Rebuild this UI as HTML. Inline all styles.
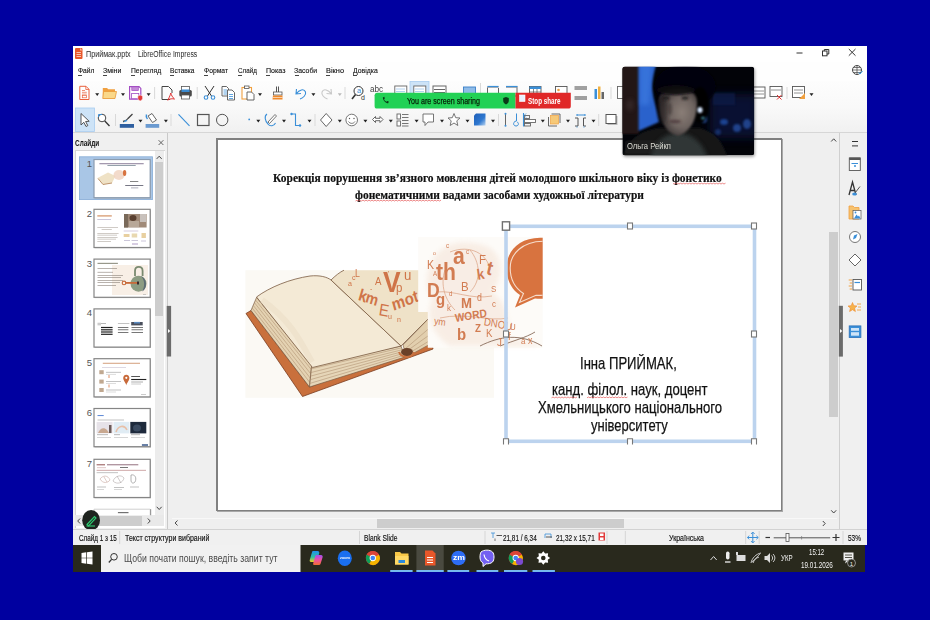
<!DOCTYPE html>
<html><head><meta charset="utf-8">
<style>
*{margin:0;padding:0;box-sizing:border-box}
html,body{width:930px;height:620px;overflow:hidden;position:relative;background:#0000a0;font-family:"Liberation Sans",sans-serif}
.a{position:absolute}
.t{position:absolute;white-space:nowrap;transform-origin:0 50%}
svg.s{position:absolute;left:0;top:0;overflow:visible}

</style></head><body>
<div class="a" style="left:73px;top:46px;width:794px;height:483px;background:#f9f9f9;"></div>
<div class="a" style="left:73px;top:46px;width:794px;height:16px;background:#ffffff;"></div>
<div class="a" style="left:73px;top:62px;width:794px;height:19px;background:#fefefe;"></div>
<div class="a" style="left:73px;top:81px;width:794px;height:51px;background:#f8f8f8;background:linear-gradient(#fdfdfd,#f9f9f9 50%,#f1f1f1)"></div>
<div class="a" style="left:73px;top:132px;width:794px;height:1px;background:#d6d6d6;"></div>
<svg class="s" width="930" height="620" viewBox="0 0 930 620" style="">
<rect x="75" y="48" width="7.5" height="11" rx="1" fill="#e8572a"/>
<path d="M80 48 L82.5 50.5 L80 50.5Z" fill="#f7b8a0"/>
<rect x="76.5" y="52" width="4.5" height="0.8" fill="#fff" opacity=".8"/>
<rect x="76.5" y="54" width="4.5" height="0.8" fill="#fff" opacity=".8"/>
<rect x="76.5" y="56" width="4.5" height="0.8" fill="#fff" opacity=".8"/>
<line x1="796.5" y1="53" x2="802.5" y2="53" stroke="#333" stroke-width="1"/>
<rect x="822.5" y="51" width="4.5" height="4.8" fill="none" stroke="#333" stroke-width="1"/>
<path d="M824.3 51 V49.5 H828.8 V54 H827" fill="none" stroke="#333" stroke-width="1"/>
<path d="M848.8 49 L855.5 55.7 M855.5 49 L848.8 55.7" stroke="#333" stroke-width="1"/>
<circle cx="857" cy="70" r="4.5" fill="none" stroke="#444" stroke-width="1"/>
<path d="M852.5 70 H861.5 M857 65.5 V74.5 M853.5 67.5 H860.5 M853.5 72.5 H860.5" stroke="#444" stroke-width=".7"/>
<path d="M858.5 72.5 L860 74 L862.5 71" fill="none" stroke="#3c9be0" stroke-width="1"/>
</svg>
<div class="t" style="left:86.00px;top:49.89px;font-size:8.4px;line-height:8.4px;color:#2a2a2a;font-family:'Liberation Sans',sans-serif;font-weight:normal;transform:scaleX(0.8552);">Приймак.pptx</div>
<div class="t" style="left:137.70px;top:49.89px;font-size:8.4px;line-height:8.4px;color:#2a2a2a;font-family:'Liberation Sans',sans-serif;font-weight:normal;transform:scaleX(0.8184);">LibreOffice Impress</div>
<div class="t" style="left:77.60px;top:67.21px;font-size:7.9px;line-height:7.9px;color:#111;font-family:'Liberation Sans',sans-serif;font-weight:normal;transform:scaleX(0.8454);-webkit-text-stroke:.12px #111;">Файл</div>
<div class="a" style="left:78.1px;top:75.4px;width:4px;height:0.8px;background:#444;"></div>
<div class="t" style="left:102.80px;top:67.21px;font-size:7.9px;line-height:7.9px;color:#111;font-family:'Liberation Sans',sans-serif;font-weight:normal;transform:scaleX(0.8885);-webkit-text-stroke:.12px #111;">Зміни</div>
<div class="a" style="left:103.3px;top:75.4px;width:4px;height:0.8px;background:#444;"></div>
<div class="t" style="left:130.70px;top:67.21px;font-size:7.9px;line-height:7.9px;color:#111;font-family:'Liberation Sans',sans-serif;font-weight:normal;transform:scaleX(0.8595);-webkit-text-stroke:.12px #111;">Перегляд</div>
<div class="a" style="left:131.2px;top:75.4px;width:4px;height:0.8px;background:#444;"></div>
<div class="t" style="left:169.80px;top:67.21px;font-size:7.9px;line-height:7.9px;color:#111;font-family:'Liberation Sans',sans-serif;font-weight:normal;transform:scaleX(0.8354);-webkit-text-stroke:.12px #111;">Вставка</div>
<div class="a" style="left:170.3px;top:75.4px;width:4px;height:0.8px;background:#444;"></div>
<div class="t" style="left:203.60px;top:67.21px;font-size:7.9px;line-height:7.9px;color:#111;font-family:'Liberation Sans',sans-serif;font-weight:normal;transform:scaleX(0.8598);-webkit-text-stroke:.12px #111;">Формат</div>
<div class="a" style="left:204.1px;top:75.4px;width:4px;height:0.8px;background:#444;"></div>
<div class="t" style="left:237.50px;top:67.21px;font-size:7.9px;line-height:7.9px;color:#111;font-family:'Liberation Sans',sans-serif;font-weight:normal;transform:scaleX(0.7932);-webkit-text-stroke:.12px #111;">Слайд</div>
<div class="a" style="left:238.0px;top:75.4px;width:4px;height:0.8px;background:#444;"></div>
<div class="t" style="left:265.50px;top:67.21px;font-size:7.9px;line-height:7.9px;color:#111;font-family:'Liberation Sans',sans-serif;font-weight:normal;transform:scaleX(0.8980);-webkit-text-stroke:.12px #111;">Показ</div>
<div class="a" style="left:266.0px;top:75.4px;width:4px;height:0.8px;background:#444;"></div>
<div class="t" style="left:294.00px;top:67.21px;font-size:7.9px;line-height:7.9px;color:#111;font-family:'Liberation Sans',sans-serif;font-weight:normal;transform:scaleX(0.8753);-webkit-text-stroke:.12px #111;">Засоби</div>
<div class="a" style="left:294.5px;top:75.4px;width:4px;height:0.8px;background:#444;"></div>
<div class="t" style="left:325.70px;top:67.21px;font-size:7.9px;line-height:7.9px;color:#111;font-family:'Liberation Sans',sans-serif;font-weight:normal;transform:scaleX(0.9368);-webkit-text-stroke:.12px #111;">Вікно</div>
<div class="a" style="left:326.2px;top:75.4px;width:4px;height:0.8px;background:#444;"></div>
<div class="t" style="left:352.70px;top:67.21px;font-size:7.9px;line-height:7.9px;color:#111;font-family:'Liberation Sans',sans-serif;font-weight:normal;transform:scaleX(0.8702);-webkit-text-stroke:.12px #111;">Довідка</div>
<div class="a" style="left:353.2px;top:75.4px;width:4px;height:0.8px;background:#444;"></div>
<svg class="s" width="930" height="620" viewBox="0 0 930 620" style=""><path d="M79.8 86.3 H86 L89 89.3 V99.5 H79.8Z" fill="#fff" stroke="#e8603c" stroke-width="1"/><path d="M85.8 86.3 V89.5 H89" fill="none" stroke="#e8603c" stroke-width=".8"/><path d="M82 90.5 H85 M82 92.3 H86.8 M82 94.1 H86.8" stroke="#e8603c" stroke-width=".7"/><rect x="82.3" y="95.5" width="4.2" height="2.3" fill="none" stroke="#e8603c" stroke-width=".7"/><path d="M95.2 93.3 H99.2 L97.2 96.1Z" fill="#222"/><path d="M102.8 88 H107 L108.3 89.3 H115 V98.5 H102.8Z" fill="#f0a040"/><path d="M103.5 91.5 H116.5 L115 98.5 H102.8Z" fill="#fad88a" stroke="#e89b3a" stroke-width=".8"/><path d="M121 93.3 H125 L123 96.1Z" fill="#222"/><path d="M129.6 86.6 H139 L140.8 88.4 V99.2 H129.6Z" fill="#fff" stroke="#a24cc2" stroke-width="1.2"/><rect x="131.8" y="86.8" width="6.5" height="3.8" fill="#c58ad8" stroke="#a24cc2" stroke-width=".7"/><rect x="131.6" y="93.5" width="7.2" height="5.2" fill="#fff" stroke="#a24cc2" stroke-width=".8"/><path d="M137.8 96 L140.2 95 L142.6 96 V98.2 C142.6 99.6 141.3 100.5 140.2 101 C139.1 100.5 137.8 99.6 137.8 98.2Z" fill="#e23a3a" stroke="#fff" stroke-width=".5"/><path d="M146.6 93.3 H150.6 L148.6 96.1Z" fill="#222"/><rect x="154.1" y="87" width="1" height="12" fill="#d9d9d9"/><path d="M170 99.5 H162 V86.5 H168.5 L172 90 V93" fill="none" stroke="#444" stroke-width="1"/><path d="M168 99.8 C169.5 97 170.5 94.5 170.8 93 C171.2 94.8 172.5 97.5 174.5 99 C172.5 98.6 169.8 98.6 167.5 100.2" fill="none" stroke="#e03030" stroke-width="1"/><rect x="181.5" y="86.5" width="8" height="4" fill="#fff" stroke="#555" stroke-width=".8"/><rect x="179.3" y="90" width="12.5" height="6.5" rx="1.5" fill="#4a4a4a"/><rect x="181.5" y="89.5" width="8" height="2.5" fill="#3a8ad0"/><rect x="181.5" y="95" width="8" height="4" fill="#fff" stroke="#555" stroke-width=".8"/><rect x="196.7" y="87" width="1" height="12" fill="#d9d9d9"/><path d="M205 86 L211.5 96 M214 86 L207.5 96" stroke="#333" stroke-width="1"/><circle cx="206" cy="97.5" r="1.8" fill="none" stroke="#3a8fd8" stroke-width="1.1"/><circle cx="213" cy="97.5" r="1.8" fill="none" stroke="#3a8fd8" stroke-width="1.1"/><path d="M222 86.5 H226.5 L228.5 88.5 V96 H222Z" fill="#fff" stroke="#555" stroke-width=".9"/><path d="M223.5 90 H227 M223.5 92 H227 M223.5 94 H227" stroke="#3a8fd8" stroke-width=".8"/><path d="M227.5 90 H232 L234.5 92.5 V100 H227.5Z" fill="#fff" stroke="#555" stroke-width=".9"/><path d="M229 94.5 H233 M229 96.5 H233 M229 98.5 H233" stroke="#3a8fd8" stroke-width=".8"/><rect x="242" y="87.5" width="9.5" height="11.5" fill="#fff" stroke="#f0a040" stroke-width="1.1"/><rect x="244.5" y="86" width="4.5" height="2.5" fill="#fff" stroke="#555" stroke-width=".8"/><path d="M247 92 H251.5 L254 94.5 V100 H247Z" fill="#fff" stroke="#555" stroke-width=".9"/><path d="M258 93.3 H262 L260 96.1Z" fill="#222"/><path d="M276.5 86.5 V92 M278.5 86.5 V92" stroke="#555" stroke-width="1"/><rect x="273.5" y="92" width="8.5" height="3" fill="#fff" stroke="#555" stroke-width=".8"/><path d="M273 95.5 H282.5 L282.5 99.5 H272.5Z" fill="#f08a2c"/><path d="M273 97.5 H282.5" stroke="#fff" stroke-width=".6"/><path d="M296.5 89 L296 94 L301 93.5 M296.5 93.5 C299 90 304 88 305.5 92 C306.5 95 303 98 300 99" fill="none" stroke="#3a8fd8" stroke-width="1.1"/><path d="M311.4 93.3 H315.4 L313.4 96.1Z" fill="#222"/><path d="M331 89 L331.5 94 L326.5 93.5 M331 93.5 C328.5 90 323.5 88 322 92 C321 95 324.5 98 327.5 99" fill="none" stroke="#c8c8c8" stroke-width="1.1"/><path d="M337.8 93.3 H341.8 L339.8 96Z" fill="#bbb"/><rect x="344.5" y="87" width="1" height="12" fill="#d9d9d9"/><circle cx="358.5" cy="91" r="4.5" fill="#fff" stroke="#333" stroke-width="1"/><path d="M355.5 94.5 L352 99" stroke="#333" stroke-width="1.6"/><rect x="394.8" y="86" width="12" height="10" fill="#fff" stroke="#666" stroke-width=".9"/><path d="M396.5 89 H405 M396.5 91.5 H405 M396.5 94 H405" stroke="#3a8fd8" stroke-width=".8" stroke-dasharray="1 1"/><rect x="410" y="81.5" width="19" height="24" fill="#cde3f7" stroke="#a8cdf0" stroke-width=".8"/><rect x="413.8" y="86" width="12" height="10" fill="#fff" stroke="#666" stroke-width=".9"/><path d="M415.5 89 H424 M415.5 91.5 H424 M415.5 94 H424" stroke="#3a8fd8" stroke-width=".8" stroke-dasharray="1 1"/><rect x="433" y="86" width="13" height="10" fill="#fff" stroke="#666" stroke-width="1"/><path d="M434 89.5 H445 M434 92.5 H445" stroke="#666" stroke-width="1"/><rect x="463.5" y="87" width="12" height="9" fill="#8fbce8" stroke="#3a7fc8" stroke-width=".9"/><rect x="480.0" y="83" width="1" height="12" fill="#d9d9d9"/><path d="M487.5 87 H498.5 M487.5 87.5 V96 H498.5 V88" fill="none" stroke="#555" stroke-width=".9"/><path d="M487.5 86.5 H498.5" stroke="#3a8fd8" stroke-width="1.2"/><path d="M506 87 H517.5 M517 87.5 V96 H506" fill="none" stroke="#555" stroke-width=".9"/><path d="M506 86.5 H517.5" stroke="#3a8fd8" stroke-width="1.2"/><rect x="529.5" y="86.5" width="11.5" height="9.5" fill="#fff" stroke="#555" stroke-width=".9"/><rect x="529.5" y="86.5" width="11.5" height="2.5" fill="#3a8fd8"/><path d="M533.5 89 V96 M537 89 V96 M529.5 92 H541" stroke="#555" stroke-width=".7"/><rect x="555.5" y="86.5" width="11.5" height="12" fill="#fff" stroke="#555" stroke-width=".9"/><circle cx="558.5" cy="90" r="1.3" fill="#f0a040"/><path d="M574.5 87 H587 M574.5 89 H587 M574.5 97 H587 M574.5 99 H587" stroke="#444" stroke-width="1"/><rect x="594.5" y="89" width="2.5" height="10" fill="#3a8fd8"/><rect x="598" y="86.5" width="2.5" height="12.5" fill="#f0b040"/><rect x="601.5" y="92" width="2.5" height="7" fill="#666"/><rect x="610.5" y="87" width="1" height="12" fill="#d9d9d9"/><rect x="617.5" y="86.5" width="6" height="12" fill="#fff" stroke="#666" stroke-width=".9"/><rect x="753" y="87" width="12" height="11" fill="#fff" stroke="#555" stroke-width=".9"/><path d="M754 91 H764 M754 94 H764" stroke="#777" stroke-width=".8"/><rect x="770" y="86.5" width="12" height="10" fill="#fff" stroke="#555" stroke-width=".9"/><path d="M771 90 H781" stroke="#777" stroke-width=".8"/><path d="M777 95 L781.5 99.5 M781.5 95 L777 99.5" stroke="#e03030" stroke-width="1"/><rect x="786.5" y="87" width="1" height="12" fill="#d9d9d9"/><rect x="792.5" y="86.5" width="12" height="11" fill="#fff" stroke="#555" stroke-width=".9"/><path d="M794 90 H803 M794 93 H803" stroke="#777" stroke-width=".8"/><path d="M799 99 L805 93 V99Z" fill="#f0a040"/><path d="M809.5 93.3 H813.5 L811.5 96.1Z" fill="#222"/><rect x="75.5" y="108" width="19" height="23.5" fill="#cde3f7" stroke="#a8cdf0" stroke-width=".8"/><path d="M81 113.5 L81 125 L83.8 122.3 L86 126.5 L87.8 125.6 L85.6 121.5 L89.2 121.3Z" fill="#fff" stroke="#444" stroke-width=".9"/><circle cx="102" cy="118" r="3.8" fill="#fff" stroke="#333" stroke-width=".9"/><path d="M104.8 121 L109.5 126" stroke="#333" stroke-width="1.3"/><path d="M98.5 114.5 H102 M98.5 114.5 V117" stroke="#3a8fd8" stroke-width="1"/><rect x="115.0" y="114" width="1" height="12" fill="#d9d9d9"/><path d="M123 121.5 C125 121 127 120 128 118.5 L132.5 114" stroke="#444" stroke-width="1.3" fill="none"/><path d="M123 122.5 L126 119.5 L127.5 121Z" fill="#3a8fd8"/><rect x="119.8" y="124" width="14.2" height="3.8" fill="#2e5fa0"/><path d="M138.5 119.8 H142.5 L140.5 122.6Z" fill="#222"/><path d="M148 116 L152 113.5 L156.5 120 L152.5 122.5Z" fill="#fff" stroke="#555" stroke-width=".9"/><path d="M146.5 114.5 C146 116 146.5 118 147.5 119" stroke="#3a8fd8" stroke-width="1.5" fill="none"/><rect x="145.6" y="124" width="13.6" height="3.8" fill="#6a9ad0"/><path d="M163.9 119.8 H167.9 L165.9 122.6Z" fill="#222"/><rect x="170.5" y="114" width="1" height="12" fill="#d9d9d9"/><path d="M178.5 114.3 L189.5 125.9" stroke="#3a8fd8" stroke-width="1.1"/><rect x="197.5" y="114.5" width="11.5" height="11" fill="none" stroke="#555" stroke-width="1.2"/><circle cx="222.2" cy="120" r="5.7" fill="none" stroke="#555" stroke-width="1"/><circle cx="249.2" cy="119.4" r=".9" fill="#3a8fd8"/><path d="M256.3 119.8 H260.3 L258.3 122.6Z" fill="#222"/><path d="M267 114 C264 116 265 121 268 124 C270 127 274 126 275.5 123" fill="none" stroke="#3a8fd8" stroke-width="1.1"/><path d="M268 122 L275 114.5 L276.5 116 L269.5 123.5Z" fill="#fff" stroke="#555" stroke-width=".8"/><path d="M282 119.8 H286 L284 122.6Z" fill="#222"/><path d="M291.5 114 H295.5 V125.5 H300" fill="none" stroke="#3a8fd8" stroke-width="1.1"/><circle cx="291.5" cy="114" r="1.2" fill="#3a8fd8"/><circle cx="300" cy="125.5" r="1.2" fill="#3a8fd8"/><path d="M307.5 119.8 H311.5 L309.5 122.6Z" fill="#222"/><rect x="314.5" y="114" width="1" height="12" fill="#d9d9d9"/><path d="M326.2 113.5 L332 120 L326.2 126.5 L320.5 120Z" fill="#fff" stroke="#555" stroke-width=".9"/><path d="M337.8 119.8 H341.8 L339.8 122.6Z" fill="#222"/><circle cx="351.7" cy="120" r="5.8" fill="#fff" stroke="#666" stroke-width=".9"/><circle cx="349.5" cy="118.5" r=".7" fill="#555"/><circle cx="354" cy="118.5" r=".7" fill="#555"/><path d="M348.5 121.5 C350 124 353.5 124 355 121.5" fill="none" stroke="#555" stroke-width=".8"/><path d="M363.4 119.8 H367.4 L365.4 122.6Z" fill="#222"/><path d="M372.5 119.5 L375.5 116.5 V118.3 H380 V116.5 L383 119.5 L380 122.5 V120.7 H375.5 V122.5Z" fill="#fff" stroke="#555" stroke-width=".9"/><path d="M388.8 119.8 H392.8 L390.8 122.6Z" fill="#222"/><rect x="397" y="114" width="3.5" height="5" fill="#fff" stroke="#666" stroke-width=".9"/><rect x="397" y="121" width="3.5" height="5" fill="#fff" stroke="#666" stroke-width=".9"/><path d="M402 114.5 H408.5 M402 117.5 H408.5 M402 120.5 H408.5 M402 123.5 H408.5 M402 126 H408.5" stroke="#666" stroke-width=".9"/><path d="M414.6 119.8 H418.6 L416.6 122.6Z" fill="#222"/><path d="M423 114 H433.5 V122 H428 L425 125.5 V122 H423Z" fill="#fff" stroke="#666" stroke-width=".9"/><path d="M440 119.8 H444 L442 122.6Z" fill="#222"/><path d="M454 113.5 L455.7 117.7 L460 118 L456.8 120.8 L457.8 125.5 L454 123 L450.2 125.5 L451.2 120.8 L448 118 L452.3 117.7Z" fill="#fff" stroke="#666" stroke-width=".9"/><path d="M465.5 119.8 H469.5 L467.5 122.6Z" fill="#222"/><defs><linearGradient id="g3d" x1="0" y1="0" x2="1" y2="1"><stop offset="0" stop-color="#1e5fb8"/><stop offset=".6" stop-color="#2f78d0"/><stop offset="1" stop-color="#b8d4f0"/></linearGradient></defs><path d="M476 113.5 H485.5 V125.5 H474 V115.5Z" fill="url(#g3d)"/><path d="M491 119.8 H495 L493 122.6Z" fill="#222"/><rect x="498.0" y="114" width="1" height="12" fill="#d9d9d9"/><path d="M505.5 113.5 V126" stroke="#666" stroke-width="1"/><circle cx="505.5" cy="113.8" r="1" fill="#3a8fd8"/><circle cx="505.5" cy="125.8" r="1" fill="#3a8fd8"/><path d="M516.5 113.5 V121 M516.5 121 C513 121 512.5 126 516 126 C519 126 519 122.5 517 122" fill="none" stroke="#3a8fd8" stroke-width="1"/><path d="M523.5 113 V126.5" stroke="#3a8fd8" stroke-width="1.1"/><rect x="524.5" y="115.5" width="5" height="3" fill="none" stroke="#666" stroke-width=".9"/><rect x="524.5" y="119.5" width="11" height="3" fill="#fff" stroke="#666" stroke-width=".9"/><rect x="524.5" y="123.5" width="6" height="2.5" fill="none" stroke="#666" stroke-width=".9"/><path d="M526 113.5 L524 115.5 L526 117.5" fill="none" stroke="#3a8fd8" stroke-width=".8"/><path d="M540.8 119.8 H544.8 L542.8 122.6Z" fill="#222"/><path d="M548.5 117 V126 H557" fill="none" stroke="#666" stroke-width="1"/><path d="M551.5 114 H560 V123" fill="none" stroke="#666" stroke-width="1"/><rect x="550.5" y="115.5" width="8" height="8.5" fill="#f6c978" stroke="#f0a040" stroke-width=".7"/><path d="M566 119.8 H570 L568 122.6Z" fill="#222"/><path d="M575 118 H578 V126 H575 M586 118 H583.5 V126 H586" fill="none" stroke="#555" stroke-width="1"/><path d="M577 115 H585 M577 114 V116 M585 114 V116" stroke="#3a8fd8" stroke-width="1"/><path d="M577 126.5 V127.5 M584 126.5 V127.5" stroke="#3a8fd8" stroke-width="1"/><path d="M591.5 119.8 H595.5 L593.5 122.6Z" fill="#222"/><rect x="598.2" y="114" width="1" height="12" fill="#d9d9d9"/><rect x="607.5" y="116" width="10" height="9" fill="#bbb"/><rect x="606" y="114.5" width="10" height="9" fill="#fff" stroke="#555" stroke-width="1"/></svg>
<div class="t" style="left:357.00px;top:86.65px;font-size:7.5px;line-height:7.5px;color:#3a8fd8;font-family:'Liberation Sans',sans-serif;font-weight:normal;">a</div>
<div class="t" style="left:361.00px;top:93.57px;font-size:7px;line-height:7px;color:#333;font-family:'Liberation Sans',sans-serif;font-weight:normal;">d</div>
<div class="t" style="left:369.80px;top:85.38px;font-size:9px;line-height:9px;color:#444;font-family:'Liberation Sans',sans-serif;font-weight:normal;transform:scaleX(0.9097);">abc</div>
<div class="a" style="left:73px;top:133px;width:94px;height:396px;background:#f0f0f0;"></div>
<div class="a" style="left:74.5px;top:149.8px;width:90px;height:378px;background:#ffffff;"></div>
<div class="a" style="left:74.5px;top:149.8px;width:90px;height:1px;background:#d6d6d6;"></div>
<div class="a" style="left:74.5px;top:149.8px;width:1px;height:378px;background:#d6d6d6;"></div>
<div class="a" style="left:167px;top:133px;width:1px;height:396px;background:#c9c9c9;"></div>
<div class="t" style="left:74.80px;top:138.69px;font-size:8.4px;line-height:8.4px;color:#111;font-family:'Liberation Sans',sans-serif;font-weight:bold;transform:scaleX(0.7649);">Слайди</div>
<div class="a" style="left:154.8px;top:151px;width:9px;height:364px;background:#ececec;"></div>
<div class="a" style="left:155.3px;top:162px;width:8.2px;height:153.6px;background:#cdcdcd;"></div>
<div class="a" style="left:168px;top:133px;width:671px;height:396px;background:#efefef;"></div>
<div class="a" style="left:839px;top:133px;width:1px;height:396px;background:#cfcfcf;"></div>
<div class="a" style="left:840px;top:133px;width:27px;height:396px;background:#f0f0f0;"></div>
<div class="a" style="left:829.3px;top:232.4px;width:9px;height:185px;background:#cdcdcd;"></div>
<div class="a" style="left:172px;top:518px;width:665px;height:1px;background:#f8f8f8;"></div>
<div class="a" style="left:377px;top:519px;width:246.5px;height:9px;background:#cdcdcd;"></div>
<div class="a" style="left:75px;top:515.4px;width:89px;height:11px;background:#e9e9e9;"></div>
<div class="a" style="left:96.6px;top:516px;width:45.8px;height:9.5px;background:#cdcdcd;"></div>
<svg class="s" width="930" height="620" viewBox="0 0 930 620" style=""><path d="M156.7 158.9 L159.2 156.20000000000002 L161.7 158.9" fill="none" stroke="#444" stroke-width="1"/><path d="M156.7 506.8 L159.2 509.5 L161.7 506.8" fill="none" stroke="#444" stroke-width="1"/><path d="M80.10000000000001 518.5 L77.7 521 L80.10000000000001 523.5" fill="none" stroke="#444" stroke-width="1"/><path d="M147.8 518.5 L150.2 521 L147.8 523.5" fill="none" stroke="#444" stroke-width="1"/><path d="M831.2 141.5 L833.7 138.8 L836.2 141.5" fill="none" stroke="#444" stroke-width="1"/><path d="M831.2 510.3 L833.7 513.0 L836.2 510.3" fill="none" stroke="#444" stroke-width="1"/><path d="M177.5 520.5 L175.10000000000002 523 L177.5 525.5" fill="none" stroke="#444" stroke-width="1"/><path d="M822.8 521.0 L825.2 523.5 L822.8 526.0" fill="none" stroke="#444" stroke-width="1"/><path d="M158.6 140.2 L163.4 145 M163.4 140.2 L158.6 145" stroke="#555" stroke-width=".9"/><rect x="166.7" y="305.9" width="4.4" height="50.6" fill="#6b6b6b"/><path d="M168 329 L170.3 331 L168 333Z" fill="#fff"/><rect x="838.8" y="305.8" width="4.1" height="50.8" fill="#6b6b6b"/><path d="M840 329 L842.3 331 L840 333Z" fill="#fff"/><rect x="79.5" y="156.8" width="73" height="42.8" fill="#a9c6e6" stroke="#86acd6" stroke-width=".8"/><rect x="94.6" y="160.3" width="56.4" height="38.2" fill="#a0a0a0" opacity=".7"/><rect x="94" y="159.5" width="56.2" height="38.2" fill="#fff" stroke="#8a9cb0" stroke-width="1.2"/><rect x="94.6" y="210.10000000000002" width="56.4" height="38.2" fill="#a0a0a0" opacity=".7"/><rect x="94" y="209.3" width="56.2" height="38.2" fill="#fff" stroke="#858585" stroke-width="1.2"/><rect x="94.6" y="259.90000000000003" width="56.4" height="38.2" fill="#a0a0a0" opacity=".7"/><rect x="94" y="259.1" width="56.2" height="38.2" fill="#fff" stroke="#858585" stroke-width="1.2"/><rect x="94.6" y="309.7" width="56.4" height="38.2" fill="#a0a0a0" opacity=".7"/><rect x="94" y="308.9" width="56.2" height="38.2" fill="#fff" stroke="#858585" stroke-width="1.2"/><rect x="94.6" y="359.5" width="56.4" height="38.2" fill="#a0a0a0" opacity=".7"/><rect x="94" y="358.7" width="56.2" height="38.2" fill="#fff" stroke="#858585" stroke-width="1.2"/><rect x="94.6" y="409.3" width="56.4" height="38.2" fill="#a0a0a0" opacity=".7"/><rect x="94" y="408.5" width="56.2" height="38.2" fill="#fff" stroke="#858585" stroke-width="1.2"/><rect x="94.6" y="460.1" width="56.4" height="38.2" fill="#a0a0a0" opacity=".7"/><rect x="94" y="459.3" width="56.2" height="38.2" fill="#fff" stroke="#858585" stroke-width="1.2"/><path d="M94 515.2 V509.2 H150.2 V515.2" fill="#fff" stroke="#d0d0d0" stroke-width="1"/><rect x="150" y="509.2" width="1.2" height="6" fill="#999"/><rect x="99.4" y="163.15" width="44.30" height="1.1" fill="#7a6a8a" opacity="0.8"/><rect x="107.4" y="165.05" width="28.30" height="0.9" fill="#6a7a8a" opacity="0.8"/><path d="M97.5 178 L108 172.5 L115.5 176 L112 183 L103 184.5 Z" fill="#efe2c6"/><path d="M98 178.5 L103 184.5 L112 183" fill="none" stroke="#b88a60" stroke-width=".9"/><ellipse cx="119" cy="175" rx="5.5" ry="5" fill="#f0d2be" opacity=".8"/><ellipse cx="124.6" cy="173" rx="1.7" ry="3" fill="#d8733f"/><rect x="130" y="181.10" width="8.30" height="0.8" fill="#666" opacity="1"/><rect x="125.2" y="185.10" width="18.10" height="0.8" fill="#556" opacity="1"/><rect x="131" y="187.50" width="7.30" height="0.8" fill="#99a" opacity="1"/><rect x="97.3" y="215.25" width="14.50" height="1.3" fill="#d89a70" opacity="1"/><rect x="97.3" y="219.20" width="13.70" height="0.6" fill="#a8a0c0" opacity="1"/><rect x="124" y="214" width="22.6" height="13.5" fill="#a08a78"/><rect x="124" y="214" width="4" height="13.5" fill="#7a6a5a"/><ellipse cx="133" cy="218" rx="3.5" ry="3" fill="#5a4030"/><rect x="129" y="221" width="10" height="6" fill="#b8a898"/><rect x="140" y="214" width="6" height="8" fill="#d8d8d8" opacity=".7"/><rect x="97.3" y="227.10" width="20.70" height="0.6" fill="#b0a8a0" opacity="1"/><rect x="101.6" y="229.20" width="10.20" height="0.6" fill="#b0a8a0" opacity="1"/><rect x="97.3" y="233.10" width="21.30" height="0.6" fill="#b0a8a0" opacity="1"/><rect x="97.3" y="234.80" width="19.70" height="0.6" fill="#b0a8a0" opacity="1"/><rect x="97.3" y="237.20" width="20.30" height="0.6" fill="#b0a8a0" opacity="1"/><rect x="97.3" y="238.80" width="18.70" height="0.6" fill="#b0a8a0" opacity="1"/><rect x="97.3" y="241.00" width="13.70" height="0.6" fill="#b0a8a0" opacity="1"/><rect x="123.7" y="230.70" width="14.60" height="0.6" fill="#b8a8c8" opacity="1"/><rect x="123.7" y="234" width="5.8" height="3" fill="#e8d0a0"/><rect x="131.7" y="233.5" width="5.5" height="4" fill="#e8d8b0"/><rect x="141.5" y="233" width="4.4" height="5" fill="#e8d0a0"/><rect x="124" y="240.20" width="6.00" height="0.6" fill="#a8a0c0" opacity="1"/><rect x="131.5" y="240.20" width="6.50" height="0.6" fill="#a8a0c0" opacity="1"/><rect x="141" y="240.70" width="5.00" height="0.6" fill="#a8a0c0" opacity="1"/><rect x="132" y="243.70" width="6.00" height="0.6" fill="#7a5aa0" opacity="1"/><rect x="97.5" y="262.85" width="20.40" height="0.9" fill="#776" opacity="1"/><rect x="112" y="265" width="36" height="30" fill="#f8efe6"/><rect x="97.5" y="268.20" width="19.50" height="0.6" fill="#8a8078" opacity="1"/><rect x="97.5" y="271.90" width="15.50" height="0.6" fill="#8a8078" opacity="1"/><rect x="97.5" y="275.40" width="25.50" height="0.6" fill="#8a8078" opacity="1"/><rect x="97.5" y="277.20" width="23.50" height="0.6" fill="#8a8078" opacity="1"/><rect x="97.5" y="280.20" width="25.50" height="0.6" fill="#8a8078" opacity="1"/><rect x="97.5" y="282.00" width="22.50" height="0.6" fill="#8a8078" opacity="1"/><rect x="97.5" y="285.20" width="18.50" height="0.6" fill="#8a8078" opacity="1"/><path d="M135 276 V271 C135 265.5 142.6 265.5 142.6 271 V276" fill="none" stroke="#7a8a70" stroke-width="1.8"/><ellipse cx="138.5" cy="283.7" rx="8" ry="8" fill="#8c9c82"/><path d="M141 276 C147 278 148 289 142 291.5 C145 287 145 280 141 276Z" fill="#5c6c74"/><rect x="125" y="282" width="12.5" height="1.8" fill="#c86a3a"/><circle cx="124" cy="282.9" r="1.8" fill="none" stroke="#c86a3a" stroke-width="1.1"/><rect x="137" y="281.5" width="2" height="3" fill="#3a2a2a"/><rect x="143" y="294.20" width="3.00" height="0.6" fill="#aaa" opacity="1"/><rect x="97.5" y="322.7" width="3.5" height="2.7" fill="#ccc"/><rect x="101" y="323.20" width="5.00" height="0.6" fill="#888" opacity="1"/><rect x="101" y="326.90" width="11.60" height="1.2" fill="#222" opacity="1"/><rect x="101" y="329.20" width="11.60" height="1.2" fill="#222" opacity="1"/><rect x="101" y="331.40" width="11.60" height="1.2" fill="#222" opacity="1"/><rect x="101" y="333.70" width="11.60" height="1.2" fill="#222" opacity="1"/><rect x="117.9" y="323.25" width="11.50" height="0.7" fill="#aaa" opacity="1"/><rect x="117.9" y="327.10" width="10.50" height="0.8" fill="#555" opacity="1"/><rect x="117.9" y="329.40" width="10.50" height="0.8" fill="#555" opacity="1"/><rect x="117.9" y="332.10" width="10.50" height="0.8" fill="#555" opacity="1"/><rect x="131.2" y="322" width="11.5" height="3.4" fill="#2a3040" opacity=".85"/><rect x="134" y="321.9" width="6" height="1.6" fill="#5a8ac0"/><rect x="131.5" y="327.10" width="11.50" height="0.8" fill="#555" opacity="1"/><rect x="131.5" y="329.40" width="11.50" height="0.8" fill="#555" opacity="1"/><rect x="131.5" y="332.10" width="11.50" height="0.8" fill="#555" opacity="1"/><rect x="102.8" y="362.75" width="37.20" height="1.1" fill="#d8a888" opacity="1"/><rect x="102" y="367.40" width="24.00" height="0.6" fill="#c8c0d0" opacity="1"/><rect x="99.3" y="370.2" width="4.4" height="4" fill="#c0a890"/><rect x="106" y="371.90" width="15.00" height="0.6" fill="#999" opacity="1"/><rect x="106" y="373.95" width="10.00" height="0.5" fill="#bbb" opacity="1"/><rect x="99.3" y="379.6" width="4.4" height="4" fill="#c0a890"/><rect x="106" y="381.30" width="15.00" height="0.6" fill="#999" opacity="1"/><rect x="106" y="383.35" width="10.00" height="0.5" fill="#bbb" opacity="1"/><rect x="99.3" y="388" width="4.4" height="4" fill="#c0a890"/><rect x="106" y="389.70" width="15.00" height="0.6" fill="#999" opacity="1"/><rect x="106" y="391.75" width="10.00" height="0.5" fill="#bbb" opacity="1"/><rect x="108.6" y="375.00" width="0.80" height="3" fill="#d8733f" opacity="1"/><rect x="108.6" y="384.50" width="0.80" height="3" fill="#d8733f" opacity="1"/><path d="M123.2 378 C123.2 373.5 129.4 373.5 129.4 378 C129.4 380.5 126.3 383.5 126.3 385.5 C126.3 383.5 123.2 380.5 123.2 378Z" fill="#c86a3a"/><circle cx="126.3" cy="377.8" r="1.1" fill="#fff"/><rect x="131.2" y="376.05" width="8.80" height="0.9" fill="#444" opacity="1"/><rect x="131.2" y="378.95" width="15.10" height="1.1" fill="#222" opacity="1"/><rect x="131.2" y="381.70" width="11.80" height="0.6" fill="#777" opacity="1"/><rect x="131.2" y="383.75" width="9.80" height="0.5" fill="#999" opacity="1"/><rect x="141" y="394.20" width="5.00" height="0.6" fill="#aaa" opacity="1"/><rect x="97.5" y="415.15" width="6.20" height="0.9" fill="#4a7ad0" opacity="1"/><rect x="97.5" y="419.70" width="26.50" height="0.6" fill="#999" opacity="1"/><rect x="96.6" y="421.9" width="16" height="11.5" fill="#e6e2e8"/><path d="M98 433 C100 428 104 427 107 430 L109 433Z" fill="#c8a890"/><rect x="109" y="425" width="2.5" height="8" fill="#6a5a58"/><rect x="113.5" y="421.9" width="15.9" height="11.5" fill="#e0ecf4"/><path d="M116 432 C118 426 124 424 127 430" fill="none" stroke="#e8c0a8" stroke-width="1.6"/><rect x="130.3" y="421.9" width="16" height="11.5" fill="#1e2a3c"/><ellipse cx="137" cy="428" rx="4" ry="3.5" fill="#3a4a60"/><rect x="97" y="434.50" width="11.00" height="0.6" fill="#888" opacity="1"/><rect x="97" y="437.20" width="14.00" height="0.6" fill="#bbb" opacity="1"/><rect x="114" y="434.50" width="6.00" height="0.6" fill="#888" opacity="1"/><rect x="114" y="437.20" width="14.00" height="0.6" fill="#bbb" opacity="1"/><rect x="131" y="434.50" width="9.00" height="0.6" fill="#888" opacity="1"/><rect x="131" y="437.20" width="14.00" height="0.6" fill="#bbb" opacity="1"/><rect x="141.9" y="444.30" width="6.10" height="1.4" fill="#2a4a80" opacity="1"/><rect x="96.6" y="464.30" width="8.40" height="1" fill="#905050" opacity="1"/><rect x="107" y="464.35" width="31.30" height="0.9" fill="#886070" opacity="1"/><rect x="120" y="467.10" width="8.00" height="0.8" fill="#555" opacity="1"/><rect x="97" y="467.50" width="9.00" height="0.6" fill="#c8a0a0" opacity="1"/><rect x="96.6" y="469.90" width="49.40" height="0.6" fill="#b07070" opacity="1"/><rect x="96.6" y="472.50" width="21.40" height="0.6" fill="#999" opacity="1"/><path d="M100 479 C103 475 108 475 110 480 C108 483 103 484 100 479Z M104 477 L107 482" fill="none" stroke="#c8a8a0" stroke-width=".6"/><path d="M113 481 C115 476 121 474 124 478 C123 483 117 485 113 481Z M117 476 L121 483" fill="none" stroke="#b0a8a8" stroke-width=".6"/><path d="M131 475 C135 474 137 478 135 482 C133 484 131 483 131 480Z" fill="none" stroke="#909090" stroke-width=".7"/><rect x="97" y="486.70" width="9.00" height="0.6" fill="#999" opacity="1"/><rect x="114" y="487.20" width="10.00" height="0.6" fill="#999" opacity="1"/><rect x="130" y="486.70" width="9.00" height="0.6" fill="#999" opacity="1"/><rect x="114" y="489.20" width="8.00" height="0.6" fill="#bbb" opacity="1"/><rect x="97" y="489.20" width="7.00" height="0.6" fill="#bbb" opacity="1"/><rect x="117.9" y="512.25" width="10.60" height="0.9" fill="#444" opacity="1"/><ellipse cx="91.1" cy="520.3" rx="8.9" ry="10.3" fill="#1f2420"/><path d="M87 524.5 L94.5 516.5 L96 518 L88.5 526Z" fill="none" stroke="#2ecc71" stroke-width="1.1"/><path d="M86.5 526 H95" stroke="#2ecc71" stroke-width="1.1"/><path d="M852 141.5 H858 M852 145.9 H858" stroke="#333" stroke-width="1"/><rect x="849.3" y="158" width="11" height="12.5" fill="#fff" stroke="#555" stroke-width=".9"/><rect x="849.3" y="157.5" width="11" height="2.5" fill="#555"/><path d="M851.5 163.5 H858" stroke="#3a8fd8" stroke-width="1"/><circle cx="855" cy="166" r="1" fill="#3a8fd8"/><path d="M849 195 L852.5 182 L856 195 M850.3 190.5 H854.7" fill="none" stroke="#333" stroke-width="1.3"/><path d="M855 193 L860 186.5" stroke="#555" stroke-width="1"/><ellipse cx="854.5" cy="194" rx="2.3" ry="1.5" fill="#3a8fd8"/><path d="M849 206 H853 L854.5 207.5 H859 V219 H849Z" fill="#f6c26e" stroke="#f0a040" stroke-width=".8"/><rect x="853" y="210.5" width="8" height="8.5" fill="#fff" stroke="#555" stroke-width=".7"/><path d="M854 218.5 L856.5 214.5 L858 216.5 L859 215.5 L860.5 218.5Z" fill="#3a8fd8"/><circle cx="855.5" cy="212.5" r=".9" fill="#3a8fd8"/><circle cx="855" cy="237" r="5.5" fill="#fff" stroke="#777" stroke-width="1"/><path d="M853 239.5 L854 235.5 L857.5 234 L856 238Z" fill="#3a8fd8"/><path d="M855 254 L861 260 L855 266 L849 260Z" fill="#fff" stroke="#666" stroke-width="1"/><path d="M848.7 280 H852 M849.7 283 H852 M848.7 286 H852 M849.7 289 H852" stroke="#f0a040" stroke-width="1"/><rect x="853" y="279.5" width="8.5" height="10.5" fill="#fff" stroke="#555" stroke-width=".9"/><path d="M854.5 282.5 H860" stroke="#3a8fd8" stroke-width="1.2"/><path d="M852.5 302.5 L853.8 305.7 L857 306 L854.6 308.1 L855.4 311.5 L852.5 309.7 L849.6 311.5 L850.4 308.1 L848 306 L851.2 305.7Z" fill="#f6b24a" stroke="#f08a2c" stroke-width=".6"/><path d="M857 304 H861 M858 307 H861 M857 310 H861" stroke="#f0a040" stroke-width=".9"/><rect x="849.2" y="325.9" width="11.7" height="11.6" fill="#3a8fd8" stroke="#2a6fb8" stroke-width=".8"/><rect x="851" y="328" width="8" height="2.8" fill="#cfe4f7"/><rect x="851" y="332.2" width="8" height="3.5" fill="#cfe4f7"/></svg>
<div class="t" style="left:86.70px;top:158.96px;font-size:9.5px;line-height:9.5px;color:#555;font-family:'Liberation Sans',sans-serif;font-weight:normal;">1</div>
<div class="t" style="left:86.70px;top:208.76px;font-size:9.5px;line-height:9.5px;color:#555;font-family:'Liberation Sans',sans-serif;font-weight:normal;">2</div>
<div class="t" style="left:86.70px;top:258.56px;font-size:9.5px;line-height:9.5px;color:#555;font-family:'Liberation Sans',sans-serif;font-weight:normal;">3</div>
<div class="t" style="left:86.70px;top:308.36px;font-size:9.5px;line-height:9.5px;color:#555;font-family:'Liberation Sans',sans-serif;font-weight:normal;">4</div>
<div class="t" style="left:86.70px;top:358.16px;font-size:9.5px;line-height:9.5px;color:#555;font-family:'Liberation Sans',sans-serif;font-weight:normal;">5</div>
<div class="t" style="left:86.70px;top:407.96px;font-size:9.5px;line-height:9.5px;color:#555;font-family:'Liberation Sans',sans-serif;font-weight:normal;">6</div>
<div class="t" style="left:86.70px;top:458.76px;font-size:9.5px;line-height:9.5px;color:#555;font-family:'Liberation Sans',sans-serif;font-weight:normal;">7</div>
<div class="a" style="left:217px;top:139px;width:566px;height:373px;background:#a8a8a8;"></div>
<div class="a" style="left:216px;top:138px;width:566px;height:373px;background:#808080;"></div>
<div class="a" style="left:217.5px;top:139.5px;width:563px;height:370px;background:#ffffff;"></div>
<div class="t" style="left:273.30px;top:170.91px;font-size:13px;line-height:13px;color:#111;font-family:'Liberation Serif',serif;font-weight:bold;transform:scaleX(0.8842);-webkit-text-stroke:.2px #111;">Корекція порушення зв’язного мовлення дітей молодшого шкільного віку із фонетико</div>
<div class="t" style="left:355.30px;top:187.71px;font-size:13px;line-height:13px;color:#111;font-family:'Liberation Serif',serif;font-weight:bold;transform:scaleX(0.8815);-webkit-text-stroke:.2px #111;">фонематичними вадами засобами художньої літератури</div>
<svg class="s" width="930" height="620" viewBox="0 0 930 620" style=""><path d="M355.5 201 L357.0 200.2 L358.5 201 L360.0 200.2 L361.5 201 L363.0 200.2 L364.5 201 L366.0 200.2 L367.5 201 L369.0 200.2 L370.5 201 L372.0 200.2 L373.5 201 L375.0 200.2 L376.5 201 L378.0 200.2 L379.5 201 L381.0 200.2 L382.5 201 L384.0 200.2 L385.5 201 L387.0 200.2 L388.5 201 L390.0 200.2 L391.5 201 L393.0 200.2 L394.5 201 L396.0 200.2 L397.5 201 L399.0 200.2 L400.5 201 L402.0 200.2 L403.5 201 L405.0 200.2 L406.5 201 L408.0 200.2 L409.5 201 L411.0 200.2 L412.5 201 L414.0 200.2 L415.5 201 L417.0 200.2 L418.5 201 L420.0 200.2 L421.5 201 L423.0 200.2 L424.5 201 L426.0 200.2 L427.5 201 L429.0 200.2 L430.5 201 L432.0 200.2 L433.5 201 L435.0 200.2 L436.5 201 L438.0 200.2 L439.5 201 L441.0 200.2" fill="none" stroke="#e04040" stroke-width=".6"/><path d="M673 184 L674.5 183.2 L676.0 184 L677.5 183.2 L679.0 184 L680.5 183.2 L682.0 184 L683.5 183.2 L685.0 184 L686.5 183.2 L688.0 184 L689.5 183.2 L691.0 184 L692.5 183.2 L694.0 184 L695.5 183.2 L697.0 184 L698.5 183.2 L700.0 184 L701.5 183.2 L703.0 184 L704.5 183.2 L706.0 184 L707.5 183.2 L709.0 184 L710.5 183.2 L712.0 184 L713.5 183.2 L715.0 184 L716.5 183.2 L718.0 184 L719.5 183.2 L721.0 184 L722.5 183.2 L724.0 184 L725.5 183.2" fill="none" stroke="#e04040" stroke-width=".6"/><rect x="245.4" y="270.2" width="248.6" height="127.6" fill="#fbf9f4"/><path d="M246 313.5 L302.5 396.5 L433 349 L432 343.5 L309.5 387 L251 310.5 Z" fill="#c9703c" stroke="#7a3c20" stroke-width=".8"/><path d="M251 310.5 L256.6 297.4 L311.7 365.2 L309.5 387 Z" fill="#e4d2b2" stroke="#7a5a40" stroke-width=".7"/><path d="M252.1 307.9 L309.9 382.6" stroke="#a88868" stroke-width=".5"/><path d="M253.2 305.3 L310.4 378.3" stroke="#a88868" stroke-width=".5"/><path d="M254.4 302.6 L310.8 373.9" stroke="#a88868" stroke-width=".5"/><path d="M255.5 300.0 L311.3 369.6" stroke="#a88868" stroke-width=".5"/><path d="M311.7 365.2 L401 346 L405 357 L309.5 387 Z" fill="#e6d6b8" stroke="#7a5a40" stroke-width=".7"/><path d="M311.3 368.8 L401.7 347.8" stroke="#a88868" stroke-width=".5"/><path d="M311.0 372.5 L402.3 349.7" stroke="#a88868" stroke-width=".5"/><path d="M310.6 376.1 L403.0 351.5" stroke="#a88868" stroke-width=".5"/><path d="M310.2 379.7 L403.7 353.3" stroke="#a88868" stroke-width=".5"/><path d="M309.9 383.4 L404.3 355.2" stroke="#a88868" stroke-width=".5"/><path d="M403 345 L432 315 L434 342 L406.5 357 Z" fill="#e2cfae" stroke="#8a6a50" stroke-width=".7"/><path d="M405 349 L433 325 M405.5 352 L433.5 332 M406 355 L434 338" stroke="#a88868" stroke-width=".5"/><path d="M256.5 297 C270 287 290 279 310 276 C320 275 327 277 331 280 L401 346 L312.5 367.5 Z" fill="#f4ead6" stroke="#7a5a40" stroke-width=".8"/><path d="M262 300 C290 320 300 340 312 362" fill="none" stroke="#eadcc4" stroke-width="6" opacity=".5"/><path d="M331 280 C335 276 340 272 344 270.2 L427.8 270.2 L432 315 L401 346 Z" fill="#efe2c8"/><path d="M344 270.2 C340 272 335 276 331 280 L401 346 L432 315" fill="none" stroke="#7a5a40" stroke-width=".8"/><ellipse cx="407" cy="352" rx="6" ry="4" fill="#6a4028"/><path d="M399 352 C401 358 412 359 414 352" fill="none" stroke="#c9713f" stroke-width="2"/></svg>
<div class="t" style="left:382.50px;top:267.31px;font-size:30px;line-height:30px;color:#cf7448;font-family:'Liberation Sans',sans-serif;font-weight:bold;transform:scaleX(.88) rotate(0deg);">V</div>
<div class="t" style="left:404.00px;top:267.00px;font-size:15px;line-height:15px;color:#cf7448;font-family:'Liberation Sans',sans-serif;font-weight:normal;transform:scaleX(.88) rotate(0deg);">u</div>
<div class="t" style="left:358.50px;top:285.61px;font-size:17px;line-height:17px;color:#cf7448;font-family:'Liberation Sans',sans-serif;font-weight:bold;transform:scaleX(.88) rotate(18deg);">k</div>
<div class="t" style="left:366.00px;top:289.46px;font-size:16px;line-height:16px;color:#cf7448;font-family:'Liberation Sans',sans-serif;font-weight:bold;transform:scaleX(.88) rotate(18deg);">m</div>
<div class="t" style="left:378.50px;top:301.11px;font-size:17px;line-height:17px;color:#cf7448;font-family:'Liberation Sans',sans-serif;font-weight:normal;transform:scaleX(.88) rotate(10deg);">E</div>
<div class="t" style="left:392.00px;top:296.61px;font-size:17px;line-height:17px;color:#cf7448;font-family:'Liberation Sans',sans-serif;font-weight:bold;transform:scaleX(.88) rotate(-18deg);">mot</div>
<div class="t" style="left:375.00px;top:276.39px;font-size:11px;line-height:11px;color:#cf7448;font-family:'Liberation Sans',sans-serif;font-weight:normal;transform:scaleX(.88) rotate(0deg);">A</div>
<div class="t" style="left:396.00px;top:281.00px;font-size:13px;line-height:13px;color:#cf7448;font-family:'Liberation Sans',sans-serif;font-weight:normal;transform:scaleX(.88) rotate(0deg);">p</div>
<div class="t" style="left:354.50px;top:268.53px;font-size:10px;line-height:10px;color:#cf7448;font-family:'Liberation Sans',sans-serif;font-weight:normal;transform:scaleX(.88) rotate(0deg);">L</div>
<div class="t" style="left:348.00px;top:280.23px;font-size:8px;line-height:8px;color:#cf7448;font-family:'Liberation Sans',sans-serif;font-weight:normal;transform:scaleX(.88) rotate(0deg);">a</div>
<div class="t" style="left:397.00px;top:316.23px;font-size:8px;line-height:8px;color:#cf7448;font-family:'Liberation Sans',sans-serif;font-weight:normal;transform:scaleX(.88) rotate(0deg);">n</div>
<div class="t" style="left:352.00px;top:274.23px;font-size:8px;line-height:8px;color:#cf7448;font-family:'Liberation Sans',sans-serif;font-weight:normal;transform:scaleX(.88) rotate(0deg);">c</div>
<div class="t" style="left:388.00px;top:313.23px;font-size:8px;line-height:8px;color:#cf7448;font-family:'Liberation Sans',sans-serif;font-weight:normal;transform:scaleX(.88) rotate(0deg);">u</div>
<div class="t" style="left:370.00px;top:285.23px;font-size:8px;line-height:8px;color:#cf7448;font-family:'Liberation Sans',sans-serif;font-weight:normal;transform:scaleX(.88) rotate(0deg);">-</div>
<div class="t" style="left:388.00px;top:270.23px;font-size:8px;line-height:8px;color:#cf7448;font-family:'Liberation Sans',sans-serif;font-weight:normal;transform:scaleX(.88) rotate(0deg);">'</div>
<svg class="s" width="930" height="620" viewBox="0 0 930 620" style=""><path d="M418.2 237.1 H542.7 V347.8 H427.8 V312 H418.2Z" fill="#fdfbf8"/><defs><filter id="blur2" x="-20%" y="-20%" width="140%" height="140%"><feGaussianBlur stdDeviation="2.5"/></filter></defs><path d="M432 262 C440 240 470 238 490 248 C505 258 502 280 492 292 C506 302 512 322 506 338 C520 342 535 340 540 346 L450 346 C432 335 425 315 432 300 C424 288 426 272 432 262Z" fill="#f2dccb" opacity=".42" filter="url(#blur2)"/><path d="M450 252 C470 244 488 254 490 270 M436 292 C455 290 470 300 492 296 M440 318 C465 312 490 322 508 318 M470 250 C480 262 482 280 470 292 M445 270 C440 285 445 300 455 310" fill="none" stroke="#dba283" stroke-width=".9" opacity=".8"/><path d="M480 346 C500 336 520 333 542 346 M500 346 C515 340 525 338 535 332" fill="none" stroke="#7a5a48" stroke-width=".8"/></svg>
<div class="t" style="left:453.00px;top:243.68px;font-size:24px;line-height:24px;color:#d27c52;font-family:'Liberation Sans',sans-serif;font-weight:bold;transform:scaleX(.88) rotate(0deg);">a</div>
<div class="t" style="left:478.50px;top:253.00px;font-size:13px;line-height:13px;color:#d27c52;font-family:'Liberation Sans',sans-serif;font-weight:normal;transform:scaleX(.88) rotate(0deg);">F</div>
<div class="t" style="left:487.00px;top:256.67px;font-size:20px;line-height:20px;color:#d27c52;font-family:'Liberation Sans',sans-serif;font-weight:bold;transform:scaleX(.88) rotate(15deg);">t</div>
<div class="t" style="left:427.30px;top:258.64px;font-size:12px;line-height:12px;color:#d27c52;font-family:'Liberation Sans',sans-serif;font-weight:normal;transform:scaleX(.88) rotate(0deg);">K</div>
<div class="t" style="left:436.00px;top:260.08px;font-size:24px;line-height:24px;color:#d27c52;font-family:'Liberation Sans',sans-serif;font-weight:bold;transform:scaleX(.88) rotate(0deg);">th</div>
<div class="t" style="left:476.50px;top:266.70px;font-size:15px;line-height:15px;color:#d27c52;font-family:'Liberation Sans',sans-serif;font-weight:bold;transform:scaleX(.88) rotate(-10deg);">k</div>
<div class="t" style="left:427.30px;top:279.87px;font-size:20px;line-height:20px;color:#d27c52;font-family:'Liberation Sans',sans-serif;font-weight:bold;transform:scaleX(.88) rotate(0deg);">D</div>
<div class="t" style="left:461.00px;top:280.00px;font-size:13px;line-height:13px;color:#d27c52;font-family:'Liberation Sans',sans-serif;font-weight:normal;transform:scaleX(.88) rotate(0deg);">B</div>
<div class="t" style="left:436.00px;top:291.11px;font-size:17px;line-height:17px;color:#d27c52;font-family:'Liberation Sans',sans-serif;font-weight:bold;transform:scaleX(.88) rotate(0deg);">g</div>
<div class="t" style="left:461.00px;top:294.70px;font-size:15px;line-height:15px;color:#d27c52;font-family:'Liberation Sans',sans-serif;font-weight:bold;transform:scaleX(.88) rotate(0deg);">M</div>
<div class="t" style="left:477.00px;top:293.13px;font-size:10px;line-height:10px;color:#d27c52;font-family:'Liberation Sans',sans-serif;font-weight:normal;transform:scaleX(.88) rotate(0deg);">d</div>
<div class="t" style="left:447.00px;top:304.38px;font-size:9px;line-height:9px;color:#d27c52;font-family:'Liberation Sans',sans-serif;font-weight:normal;transform:scaleX(.88) rotate(0deg);">k</div>
<div class="t" style="left:434.00px;top:315.53px;font-size:10px;line-height:10px;color:#d27c52;font-family:'Liberation Sans',sans-serif;font-weight:normal;transform:scaleX(.88) rotate(8deg);">ym</div>
<div class="t" style="left:454.50px;top:313.27px;font-size:11.5px;line-height:11.5px;color:#d27c52;font-family:'Liberation Sans',sans-serif;font-weight:bold;transform:scaleX(.88) rotate(-8deg);">WORD</div>
<div class="t" style="left:483.50px;top:316.19px;font-size:11px;line-height:11px;color:#d27c52;font-family:'Liberation Sans',sans-serif;font-weight:normal;transform:scaleX(.88) rotate(10deg);">DNOU</div>
<div class="t" style="left:456.50px;top:325.91px;font-size:17px;line-height:17px;color:#d27c52;font-family:'Liberation Sans',sans-serif;font-weight:bold;transform:scaleX(.88) rotate(0deg);">b</div>
<div class="t" style="left:475.00px;top:323.29px;font-size:11px;line-height:11px;color:#d27c52;font-family:'Liberation Sans',sans-serif;font-weight:bold;transform:scaleX(.88) rotate(0deg);">Z</div>
<div class="t" style="left:485.50px;top:328.09px;font-size:11px;line-height:11px;color:#d27c52;font-family:'Liberation Sans',sans-serif;font-weight:normal;transform:scaleX(.88) rotate(0deg);">K</div>
<div class="t" style="left:508.00px;top:330.69px;font-size:11px;line-height:11px;color:#d27c52;font-family:'Liberation Sans',sans-serif;font-weight:normal;transform:scaleX(.88) rotate(0deg);">f</div>
<div class="t" style="left:521.00px;top:336.88px;font-size:9px;line-height:9px;color:#d27c52;font-family:'Liberation Sans',sans-serif;font-weight:normal;transform:scaleX(.88) rotate(0deg);">a</div>
<div class="t" style="left:528.00px;top:336.03px;font-size:10px;line-height:10px;color:#d27c52;font-family:'Liberation Sans',sans-serif;font-weight:normal;transform:scaleX(.88) rotate(0deg);">x</div>
<div class="t" style="left:466.00px;top:248.07px;font-size:7px;line-height:7px;color:#d27c52;font-family:'Liberation Sans',sans-serif;font-weight:normal;transform:scaleX(.88) rotate(0deg);">c</div>
<div class="t" style="left:491.00px;top:285.38px;font-size:9px;line-height:9px;color:#d27c52;font-family:'Liberation Sans',sans-serif;font-weight:normal;transform:scaleX(.88) rotate(0deg);">S</div>
<div class="t" style="left:492.00px;top:300.38px;font-size:9px;line-height:9px;color:#d27c52;font-family:'Liberation Sans',sans-serif;font-weight:normal;transform:scaleX(.88) rotate(0deg);">c</div>
<div class="t" style="left:510.00px;top:323.38px;font-size:9px;line-height:9px;color:#d27c52;font-family:'Liberation Sans',sans-serif;font-weight:normal;transform:scaleX(.88) rotate(0deg);">U</div>
<div class="t" style="left:497.00px;top:336.69px;font-size:11px;line-height:11px;color:#d27c52;font-family:'Liberation Sans',sans-serif;font-weight:normal;transform:scaleX(.88) rotate(0deg);">J</div>
<div class="t" style="left:433.00px;top:270.07px;font-size:7px;line-height:7px;color:#d27c52;font-family:'Liberation Sans',sans-serif;font-weight:normal;transform:scaleX(.88) rotate(0deg);">A</div>
<div class="t" style="left:449.00px;top:290.07px;font-size:7px;line-height:7px;color:#d27c52;font-family:'Liberation Sans',sans-serif;font-weight:normal;transform:scaleX(.88) rotate(0deg);">d</div>
<div class="t" style="left:446.00px;top:242.07px;font-size:7px;line-height:7px;color:#d27c52;font-family:'Liberation Sans',sans-serif;font-weight:normal;transform:scaleX(.88) rotate(0deg);">c</div>
<div class="t" style="left:433.00px;top:249.92px;font-size:6px;line-height:6px;color:#d27c52;font-family:'Liberation Sans',sans-serif;font-weight:normal;transform:scaleX(.88) rotate(0deg);">o</div>
<svg class="s" width="930" height="620" viewBox="0 0 930 620" style=""><defs><clipPath id="cb"><rect x="500" y="237" width="42.7" height="111"/></clipPath></defs><g clip-path="url(#cb)"><path d="M540 237.8 C518 238 506.5 252 506.5 268 C506.5 280 512 290 520 295 L515 307.4 L535 298.5 C560 301 580 285 580 268 C580 250 565 237.6 540 237.8Z" fill="#d8733f"/><path d="M543 241.2 C522 241.5 510.2 254 510.2 268 C510.2 279 515 288 523.5 293.5 L519.5 302.5 L536 295.2 C556 297 576 284 576 268" fill="none" stroke="#f6dccb" stroke-width="1.1"/></g><rect x="506" y="226.3" width="248.5" height="215" fill="none" stroke="#bcd3ee" stroke-width="3.6"/><rect x="502.4" y="221.8" width="7.2" height="8.4" fill="#fff" stroke="#707070" stroke-width="1.4"/><rect x="627.5" y="223" width="5" height="6" fill="#fff" stroke="#777" stroke-width="1.1"/><rect x="751.5" y="223" width="5" height="6" fill="#fff" stroke="#777" stroke-width="1.1"/><rect x="503.5" y="331" width="5" height="6" fill="#fff" stroke="#777" stroke-width="1.1"/><rect x="751.5" y="331" width="5" height="6" fill="#fff" stroke="#777" stroke-width="1.1"/><path d="M503.5 444.5 V438.7 H508.5 V444.5" fill="#fff" stroke="#777" stroke-width="1.1"/><path d="M627.5 444.5 V438.7 H632.5 V444.5" fill="#fff" stroke="#777" stroke-width="1.1"/><path d="M751.5 444.5 V438.7 H756.5 V444.5" fill="#fff" stroke="#777" stroke-width="1.1"/></svg>
<div class="t" style="left:579.50px;top:355.09px;font-size:16.2px;line-height:16.2px;color:#111;font-family:'Liberation Sans',sans-serif;font-weight:normal;transform:scaleX(0.8081);-webkit-text-stroke:.25px #111;">Інна ПРИЙМАК,</div>
<div class="t" style="left:551.80px;top:380.59px;font-size:16.2px;line-height:16.2px;color:#111;font-family:'Liberation Sans',sans-serif;font-weight:normal;transform:scaleX(0.8093);-webkit-text-stroke:.25px #111;">канд. філол. наук, доцент</div>
<div class="t" style="left:537.80px;top:399.29px;font-size:16.2px;line-height:16.2px;color:#111;font-family:'Liberation Sans',sans-serif;font-weight:normal;transform:scaleX(0.8092);-webkit-text-stroke:.25px #111;">Хмельницького національного</div>
<div class="t" style="left:591.00px;top:417.49px;font-size:16.2px;line-height:16.2px;color:#111;font-family:'Liberation Sans',sans-serif;font-weight:normal;transform:scaleX(0.8036);-webkit-text-stroke:.25px #111;">університету</div>
<svg class="s" width="930" height="620" viewBox="0 0 930 620" style=""><path d="M551.5 397.8 L553.0 397.0 L554.5 397.8 L556.0 397.0 L557.5 397.8 L559.0 397.0 L560.5 397.8 L562.0 397.0 L563.5 397.8 L565.0 397.0 L566.5 397.8 L568.0 397.0 L569.5 397.8 L571.0 397.0 L572.5 397.8 L574.0 397.0 L575.5 397.8 L577.0 397.0" fill="none" stroke="#e04040" stroke-width=".6"/><path d="M587 397.8 L588.5 397.0 L590.0 397.8 L591.5 397.0 L593.0 397.8 L594.5 397.0 L596.0 397.8 L597.5 397.0 L599.0 397.8 L600.5 397.0 L602.0 397.8 L603.5 397.0 L605.0 397.8 L606.5 397.0 L608.0 397.8 L609.5 397.0 L611.0 397.8 L612.5 397.0 L614.0 397.8 L615.5 397.0 L617.0 397.8 L618.5 397.0 L620.0 397.8 L621.5 397.0 L623.0 397.8 L624.5 397.0 L626.0 397.8 L627.5 397.0" fill="none" stroke="#e04040" stroke-width=".6"/></svg>
<div class="a" style="left:73px;top:528.7px;width:794px;height:1px;background:#d2d2d2;"></div>
<div class="a" style="left:73px;top:529.7px;width:794px;height:15.3px;background:#f0f0f0;"></div>
<div class="t" style="left:79.20px;top:535.06px;font-size:8.2px;line-height:8.2px;color:#111;font-family:'Liberation Sans',sans-serif;font-weight:normal;transform:scaleX(0.7741);-webkit-text-stroke:.15px #111;">Слайд 1 з 15</div>
<div class="t" style="left:124.60px;top:535.06px;font-size:8.2px;line-height:8.2px;color:#111;font-family:'Liberation Sans',sans-serif;font-weight:normal;transform:scaleX(0.8560);-webkit-text-stroke:.15px #111;">Текст структури вибраний</div>
<div class="t" style="left:364.40px;top:535.06px;font-size:8.2px;line-height:8.2px;color:#111;font-family:'Liberation Sans',sans-serif;font-weight:normal;transform:scaleX(0.8154);-webkit-text-stroke:.15px #111;">Blank Slide</div>
<div class="t" style="left:503.30px;top:535.06px;font-size:8.2px;line-height:8.2px;color:#111;font-family:'Liberation Sans',sans-serif;font-weight:normal;transform:scaleX(0.7792);-webkit-text-stroke:.15px #111;">21,81 / 6,34</div>
<div class="t" style="left:555.60px;top:535.06px;font-size:8.2px;line-height:8.2px;color:#111;font-family:'Liberation Sans',sans-serif;font-weight:normal;transform:scaleX(0.7799);-webkit-text-stroke:.15px #111;">21,32 x 15,71</div>
<div class="t" style="left:669.00px;top:535.06px;font-size:8.2px;line-height:8.2px;color:#111;font-family:'Liberation Sans',sans-serif;font-weight:normal;transform:scaleX(0.8538);-webkit-text-stroke:.15px #111;">Українська</div>
<div class="t" style="left:848.00px;top:535.06px;font-size:8.2px;line-height:8.2px;color:#111;font-family:'Liberation Sans',sans-serif;font-weight:normal;transform:scaleX(0.7933);-webkit-text-stroke:.15px #111;">53%</div>
<svg class="s" width="930" height="620" viewBox="0 0 930 620" style=""><rect x="119.2" y="531" width="1" height="13" fill="#d5d5d5"/><rect x="359.0" y="531" width="1" height="13" fill="#d5d5d5"/><rect x="484.5" y="531" width="1" height="13" fill="#d5d5d5"/><rect x="606.5" y="531" width="1" height="13" fill="#d5d5d5"/><rect x="624.8" y="531" width="1" height="13" fill="#d5d5d5"/><rect x="745.2" y="531" width="1" height="13" fill="#d5d5d5"/><rect x="758.7" y="531" width="1" height="13" fill="#d5d5d5"/><rect x="842.5" y="531" width="1" height="13" fill="#d5d5d5"/><path d="M493 533 V538 M491 533 H495" stroke="#3a8fd8" stroke-width=".8"/><path d="M496.5 535.5 H502" stroke="#444" stroke-width=".9"/><path d="M495 538.5 V541" stroke="#444" stroke-width=".7"/><path d="M545 534 H551 M545 534 V538 M551 534 V538" stroke="#3a8fd8" stroke-width=".8"/><path d="M546 537 H552" stroke="#444" stroke-width=".9"/><rect x="598.5" y="532.5" width="6.5" height="8" fill="#e23a3a"/><rect x="600" y="533.5" width="3.5" height="2.5" fill="#fff"/><rect x="600" y="537.5" width="3.5" height="2.5" fill="#fff"/><path d="M752.8 532.5 V542.5 M747.8 537.5 H757.8" stroke="#3a8fd8" stroke-width="1"/><path d="M751 534 L752.8 532 L754.6 534 M751 541 L752.8 543 L754.6 541 M749.3 535.7 L747.3 537.5 L749.3 539.3 M756.3 535.7 L758.3 537.5 L756.3 539.3" fill="none" stroke="#3a8fd8" stroke-width=".9"/><path d="M765.5 537.5 H770" stroke="#333" stroke-width="1.2"/><path d="M773.7 537.8 H830.2" stroke="#555" stroke-width="1"/><path d="M801.6 536 V539.5" stroke="#777" stroke-width=".7"/><rect x="786" y="533.5" width="3" height="8" fill="#fff" stroke="#555" stroke-width=".8"/><path d="M832.5 537.5 H839.5 M836 534 V541" stroke="#333" stroke-width="1.2"/><rect x="73" y="545" width="792" height="27" fill="#29291d"/><rect x="101" y="545" width="199.5" height="27" fill="#f1f1f1"/><path d="M81.5 553 L86.3 552.3 V557.7 H81.5Z M87 552.2 L92.5 551.4 V557.7 H87Z M81.5 558.3 H86.3 V563.7 L81.5 563Z M87 558.3 H92.5 V564.6 L87 563.8Z" fill="#fff"/><circle cx="114" cy="556.8" r="3.3" fill="none" stroke="#333" stroke-width="1"/><path d="M111.6 559.3 L108.8 562.5" stroke="#333" stroke-width="1.2"/><rect x="416.4" y="545" width="27.3" height="27" fill="#4a4a40"/><rect x="390.2" y="570" width="22.400000000000034" height="2" fill="#76b9ed"/><rect x="416.4" y="570" width="27.30000000000001" height="2" fill="#76b9ed"/><rect x="447.4" y="570" width="21.80000000000001" height="2" fill="#76b9ed"/><rect x="476.5" y="570" width="21.80000000000001" height="2" fill="#76b9ed"/><rect x="504" y="570" width="23.299999999999955" height="2" fill="#76b9ed"/><rect x="532.5" y="570" width="22.399999999999977" height="2" fill="#76b9ed"/><defs><linearGradient id="cpa" x1="0" y1="0" x2="0" y2="1"><stop offset="0" stop-color="#1e90f0"/><stop offset=".55" stop-color="#30c0a0"/><stop offset="1" stop-color="#f0d020"/></linearGradient><linearGradient id="cpb" x1="0" y1="0" x2="0" y2="1"><stop offset="0" stop-color="#a050f0"/><stop offset=".5" stop-color="#f050a0"/><stop offset="1" stop-color="#f07030"/></linearGradient></defs><path d="M313 551 H317.5 C319 551 319.6 552 319.2 553.5 L316.5 561 C316.2 561.8 315.5 562 314.8 562 H311 C309.8 562 309.4 561 309.8 559.8 L312 552.2 C312.2 551.5 312.5 551 313 551Z" fill="url(#cpa)"/><path d="M316.5 555 H321 C322.4 555 322.9 556 322.6 557.2 L320.5 564 C320.2 564.7 319.6 565 319 565 H314.5 C313.4 565 312.9 564.2 313.2 563.2 L315.4 555.8 C315.6 555.3 316 555 316.5 555Z" fill="url(#cpb)"/><ellipse cx="344.8" cy="558.3" rx="7" ry="7.8" fill="#1a6ff0"/><circle cx="372.8" cy="558" r="7" fill="#db4437"/><path d="M372.8 558 L366.738 554.5 A7 7 0 0 0 369.3 564.062Z" fill="#0f9d58"/><path d="M372.8 558 L378.862 554.5 A7 7 0 0 1 369.3 564.062Z" fill="#f4b400"/><path d="M372.8 558 L366.738 554.5 A7 7 0 0 1 378.862 554.5Z" fill="#db4437"/><circle cx="372.8" cy="558" r="3.15" fill="#fff"/><circle cx="372.8" cy="558" r="2.31" fill="#4285f4"/><path d="M395 552 H400 L401.5 553.5 H408.5 V564.5 H395Z" fill="#f8c848"/><rect x="395" y="556" width="13.5" height="8.5" fill="#ffd966"/><rect x="398.5" y="560" width="6.5" height="3" fill="#2a8ae0"/><path d="M425 550.5 H432.5 L435.5 553.5 V565.5 H425Z" fill="#e8572a"/><rect x="427" y="557" width="6" height="1" fill="#fff"/><rect x="427" y="559.5" width="6" height="1" fill="#fff"/><rect x="427" y="562" width="6" height="1" fill="#fff"/><circle cx="458.5" cy="558" r="7.3" fill="#2d6df6"/><path d="M481 552 C484 549.5 490 549.5 492.5 552 C494.5 554 494.5 560 492.5 562 C491 563.5 488 564 486 563.8 L483 566.5 V563 C481 562 480 560 480 557 C480 554.5 480.5 553 481 552Z" fill="#7360f2" stroke="#fff" stroke-width="1"/><path d="M484 554.5 C484.5 558 486 560 489 561" stroke="#fff" stroke-width="1.2" fill="none"/><circle cx="515.7" cy="558" r="7" fill="#db4437"/><path d="M515.7 558 L509.63800000000003 554.5 A7 7 0 0 0 512.2 564.062Z" fill="#0f9d58"/><path d="M515.7 558 L521.7620000000001 554.5 A7 7 0 0 1 512.2 564.062Z" fill="#f4b400"/><path d="M515.7 558 L509.63800000000003 554.5 A7 7 0 0 1 521.7620000000001 554.5Z" fill="#db4437"/><circle cx="515.7" cy="558" r="3.15" fill="#fff"/><circle cx="515.7" cy="558" r="2.31" fill="#4285f4"/><circle cx="519.5" cy="561.5" r="3.6" fill="#7a4ad0"/><path d="M550.10 558.00 L547.73 559.84 L548.11 562.81 L545.14 562.43 L543.30 564.80 L541.46 562.43 L538.49 562.81 L538.87 559.84 L536.50 558.00 L538.87 556.16 L538.49 553.19 L541.46 553.57 L543.30 551.20 L545.14 553.57 L548.11 553.19 L547.73 556.16Z" fill="#fff"/><circle cx="543.3" cy="558" r="2.3" fill="#29291d"/><path d="M710.5 560 L713.6 556.5 L716.7 560" fill="none" stroke="#ddd" stroke-width="1"/><rect x="726" y="551.5" width="3.5" height="8" rx="1.7" fill="#eee"/><path d="M725 562 H730.5" stroke="#eee" stroke-width="1.3"/><rect x="736.5" y="555" width="9" height="6" fill="#ddd"/><rect x="736" y="552" width="2" height="3" fill="#ddd"/><path d="M751 563 C752 558 756 554 761 553 M753 563 C754 560 756 558 759 557" fill="none" stroke="#ccc" stroke-width="1"/><path d="M752 562 L760 554" stroke="#ccc" stroke-width=".8"/><path d="M764.5 556 H767 L770 553 V563 L767 560 H764.5Z" fill="#ddd"/><path d="M771.5 555.5 C773 557 773 559 771.5 560.5 M773 554 C775.5 556.5 775.5 559.5 773 562" fill="none" stroke="#ddd" stroke-width=".9"/><rect x="843.5" y="552.5" width="10" height="8" fill="#eee"/><path d="M845 555 H852 M845 557.5 H852" stroke="#29291d" stroke-width=".8"/><path d="M846 560.5 L845 563.5 L849 560.5" fill="#eee"/><circle cx="851.5" cy="563" r="4" fill="#29291d" stroke="#aaa" stroke-width=".8"/></svg>
<div class="t" style="left:124.20px;top:554.34px;font-size:10px;line-height:10px;color:#4a4a4a;font-family:'Liberation Sans',sans-serif;font-weight:normal;transform:scaleX(0.8698);">Щоби почати пошук, введіть запит тут</div>
<div class="t" style="left:452.50px;top:554.23px;font-size:8px;line-height:8px;color:#fff;font-family:'Liberation Sans',sans-serif;font-weight:bold;transform:scaleX(1.0798);">zm</div>
<div class="t" style="left:340.00px;top:556.11px;font-size:4px;line-height:4px;color:#fff;font-family:'Liberation Sans',sans-serif;font-weight:bold;transform:scaleX(0.9575);">zoom</div>
<div class="t" style="left:781.00px;top:554.76px;font-size:8.2px;line-height:8.2px;color:#f0f0f0;font-family:'Liberation Sans',sans-serif;font-weight:normal;transform:scaleX(0.7517);">УКР</div>
<div class="t" style="left:809.30px;top:547.88px;font-size:9px;line-height:9px;color:#f0f0f0;font-family:'Liberation Sans',sans-serif;font-weight:normal;transform:scaleX(0.6749);">15:12</div>
<div class="t" style="left:801.30px;top:560.58px;font-size:9px;line-height:9px;color:#f0f0f0;font-family:'Liberation Sans',sans-serif;font-weight:normal;transform:scaleX(0.7082);">19.01.2026</div>
<div class="t" style="left:849.80px;top:560.92px;font-size:6px;line-height:6px;color:#eee;font-family:'Liberation Sans',sans-serif;font-weight:normal;">1</div>
<svg class="s" width="930" height="620" viewBox="0 0 930 620" style=""><path d="M377 92.8 H515.5 V108.6 H377 Q374.6 108.6 374.6 106 V95.3 Q374.6 92.8 377 92.8Z" fill="#22d155"/><path d="M515.5 92.8 H570.8 V106 Q570.8 108.6 568.3 108.6 H515.5Z" fill="#e02828"/><path d="M382.8 97.5 L384.3 96.8 L384.8 98.6 L384.1 99.3 C384.5 100.6 385.3 101.4 386.5 101.8 L387.2 101.1 L388.8 101.6 L388.2 103.3 C385.6 103.3 383.2 100.6 382.8 97.5Z" fill="#0a3a18"/><path d="M506 97 L508.8 98 V100.8 C508.8 102.5 507.6 103.6 506 104.4 C504.4 103.6 503.2 102.5 503.2 100.8 V98Z" fill="#0a3a18"/><rect x="519.5" y="95" width="5.5" height="6.5" fill="#e8f0ff" stroke="#fff" stroke-width=".6"/><defs>
<filter id="wb" x="-30%" y="-30%" width="160%" height="160%"><feGaussianBlur stdDeviation="2.2"/></filter><filter id="wb4" x="-50%" y="-50%" width="200%" height="200%"><feGaussianBlur stdDeviation="5"/></filter>
<filter id="wb1" x="-30%" y="-30%" width="160%" height="160%"><feGaussianBlur stdDeviation="1.2"/></filter>
<filter id="sh" x="-10%" y="-10%" width="120%" height="130%"><feGaussianBlur stdDeviation="1.5"/></filter>
<clipPath id="wc"><rect x="622.4" y="66.7" width="131.8" height="88.5" rx="2.5"/></clipPath>
<radialGradient id="face" cx=".6" cy=".5" r=".6"><stop offset="0" stop-color="#8a7e77"/><stop offset=".55" stop-color="#6e6460"/><stop offset="1" stop-color="#342e30"/></radialGradient>
</defs><rect x="623" y="68" width="132" height="89" rx="3" fill="#000" opacity=".35" filter="url(#sh)"/><g clip-path="url(#wc)"><rect x="622.4" y="66.7" width="131.8" height="88.5" fill="#020308"/><rect x="618" y="62" width="21" height="72" fill="#221214" filter="url(#wb1)"/><ellipse cx="630" cy="105" rx="4" ry="6" fill="#4a3a3a" opacity=".45" filter="url(#wb)"/><path d="M638.5 62 H657 C654 72 651 82 652.5 92 C654 102 657 110 659 122 L638.5 131Z" fill="#2a62cc" filter="url(#wb1)"/><path d="M640 64 H652 L649 105 H640Z" fill="#3c7ae0" opacity=".7" filter="url(#wb)"/><path d="M710 94 H758 V138 H710Z" fill="#081540" opacity=".75" filter="url(#wb4)"/><rect x="713" y="93" width="22" height="12" fill="#0a1a48" opacity=".7" filter="url(#wb1)"/><ellipse cx="724" cy="122" rx="4" ry="3" fill="#2450a8" opacity=".8" filter="url(#wb1)"/><ellipse cx="737" cy="128" rx="4" ry="4" fill="#2a58b0" opacity=".7" filter="url(#wb1)"/><ellipse cx="747" cy="124" rx="4" ry="5" fill="#2a58b0" opacity=".7" filter="url(#wb1)"/><ellipse cx="718" cy="132" rx="3" ry="3" fill="#1a3a80" opacity=".7" filter="url(#wb1)"/><ellipse cx="704" cy="119" rx="3" ry="4" fill="#2a58a8" opacity=".8" filter="url(#wb1)"/><ellipse cx="685" cy="86" rx="31" ry="21" fill="#050508" filter="url(#wb1)"/><ellipse cx="700" cy="105" rx="9" ry="18" fill="#040406" filter="url(#wb1)"/><path d="M622 160 C626 140 640 130 660 128 L700 128 C715 132 724 142 728 160Z" fill="#121618" filter="url(#wb1)"/><path d="M650 160 C652 145 662 134 677 133 C694 133 704 145 708 160Z" fill="#343c3c" opacity=".85" filter="url(#wb)"/><path d="M659 100 C659 92 667 89 678 89 C690 89 697 93 697 102 C697 118 692 131 678 136 C664 133 659 118 659 100Z" fill="url(#face)" filter="url(#wb1)"/><ellipse cx="663" cy="110" rx="5" ry="14" fill="#1a1618" opacity=".45" filter="url(#wb)"/><ellipse cx="676" cy="90" rx="19" ry="5" fill="#0a080c" opacity=".9" filter="url(#wb1)"/><ellipse cx="666" cy="98" rx="3.5" ry="2" fill="#1e1a1c" opacity=".7" filter="url(#wb1)"/><ellipse cx="685" cy="98" rx="3.5" ry="2" fill="#1e1a1c" opacity=".7" filter="url(#wb1)"/><ellipse cx="670" cy="109" rx="2.5" ry="6" fill="#2a2224" opacity=".35" filter="url(#wb1)"/><ellipse cx="675" cy="121.5" rx="6" ry="1.8" fill="#4a3638" opacity=".7" filter="url(#wb1)"/><ellipse cx="700" cy="110" rx="2.6" ry="3" fill="#d8e8ff" filter="url(#wb1)"/><ellipse cx="703" cy="118" rx="2" ry="1.5" fill="#4a9ab0" opacity=".8" filter="url(#wb1)"/><rect x="625" y="140.2" width="46" height="13.4" rx="3" fill="#2a2a2a" opacity=".35"/></g></svg>
<div class="t" style="left:407.00px;top:97.38px;font-size:9px;line-height:9px;color:#062008;font-family:'Liberation Sans',sans-serif;font-weight:normal;transform:scaleX(0.7915);-webkit-text-stroke:.25px #062008;">You are screen sharing</div>
<div class="t" style="left:527.50px;top:96.60px;font-size:8.5px;line-height:8.5px;color:#fff;font-family:'Liberation Sans',sans-serif;font-weight:bold;transform:scaleX(0.7399);">Stop share</div>
<div class="t" style="left:626.70px;top:142.21px;font-size:9.2px;line-height:9.2px;color:#dcdcd4;font-family:'Liberation Sans',sans-serif;font-weight:normal;transform:scaleX(0.8289);">Ольга Рейкп</div>
</body></html>
